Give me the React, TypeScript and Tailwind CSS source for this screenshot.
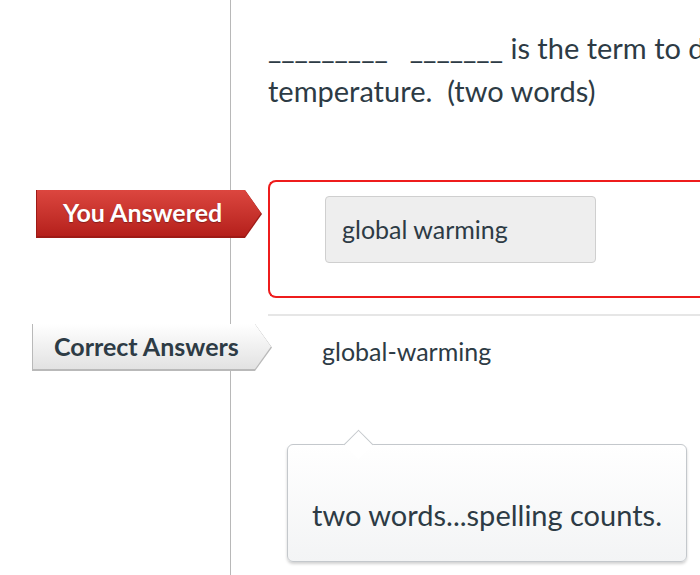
export default function App() {
  return (
    <div className="w-[700px] h-[575px] overflow-hidden bg-white text-[#2d3b45]" style={{ fontFamily: "Lato, 'Noto Sans', sans-serif" }}>
      {/* Question */}
      <div className="grid grid-cols-[231px_1fr]">
        <div className="border-r border-[#b8b8b8]" />
        <div className="pl-[37px] pt-[26px] pb-[68px] text-[29px] leading-[43px] whitespace-nowrap overflow-hidden">
          <div>
            <span>_________</span>
            <span className="ml-[22px]">_______</span> is the term to describe the increase in global
          </div>
          <div>temperature.&nbsp; (two words)</div>
        </div>
      </div>

      {/* You answered */}
      <div className="grid grid-cols-[231px_1fr]">
        <div className="border-r border-[#b8b8b8] relative z-10">
          <div className="mt-[10px] ml-[36px] w-[226px] h-[48px] bg-[#9e1a16] [clip-path:polygon(0_0,calc(100%-17px)_0,100%_50%,calc(100%-17px)_100%,0_100%)]">
            <div className="m-px h-[46px] w-[224px] bg-gradient-to-b from-[#dc463f] to-[#b51f1b] [clip-path:polygon(0_0,calc(100%-16px)_0,100%_50%,calc(100%-16px)_100%,0_100%)] flex items-center pl-[26px] text-white font-bold text-[25px] [text-shadow:0_1px_1px_rgba(0,0,0,0.3)]">
              You Answered
            </div>
          </div>
        </div>
        <div className="pl-[37px]">
          <div className="h-[118px] border-2 border-[#ee1c1c] rounded-[8px] rounded-r-none border-r-0 pl-[55px] pt-[14px]">
            <div className="w-[271px] h-[67px] bg-[#eeeeee] border border-[#cfcfcf] rounded-[4px] flex items-center pl-[16px] text-[25px]">
              global warming
            </div>
          </div>
          <div className="h-[2px] bg-[#e6e6e6] mt-[16px]" />
        </div>
      </div>

      {/* Correct answers */}
      <div className="grid grid-cols-[231px_1fr]">
        <div className="border-r border-[#b8b8b8] relative z-10">
          <div className="mt-[8px] ml-[32px] w-[240px] h-[47px] bg-[#b9b9b9] [clip-path:polygon(0_0,calc(100%-17px)_0,100%_50%,calc(100%-17px)_100%,0_100%)]">
            <div className="m-px h-[45px] w-[238px] bg-gradient-to-b from-[#ffffff] to-[#e2e2e2] [clip-path:polygon(0_0,calc(100%-16px)_0,100%_50%,calc(100%-16px)_100%,0_100%)] flex items-center pl-[21px] text-[#2d3b45] font-bold text-[25px]">
              Correct Answers
            </div>
          </div>
        </div>
        <div className="pl-[91px] pt-[19px] text-[25px] leading-[32px]">global-warming</div>
      </div>

      {/* Comment tooltip */}
      <div className="grid grid-cols-[231px_1fr] h-[220px]">
        <div className="border-r border-[#b8b8b8]" />
        <div className="pl-[56px] pt-[73px]">
          <div className="relative w-[400px] h-[118px] border border-[#c4c8cc] rounded-[6px] bg-gradient-to-b from-white to-[#f3f4f5] shadow-[0_2px_3px_rgba(0,0,0,0.18)] flex items-center justify-center text-[29px] pt-[24px]">
            <div className="absolute -top-[11px] left-[60px] w-[21px] h-[21px] rotate-45 bg-white border-l border-t border-[#c4c8cc]" />
            two words...spelling counts.
          </div>
        </div>
      </div>
    </div>
  );
}
